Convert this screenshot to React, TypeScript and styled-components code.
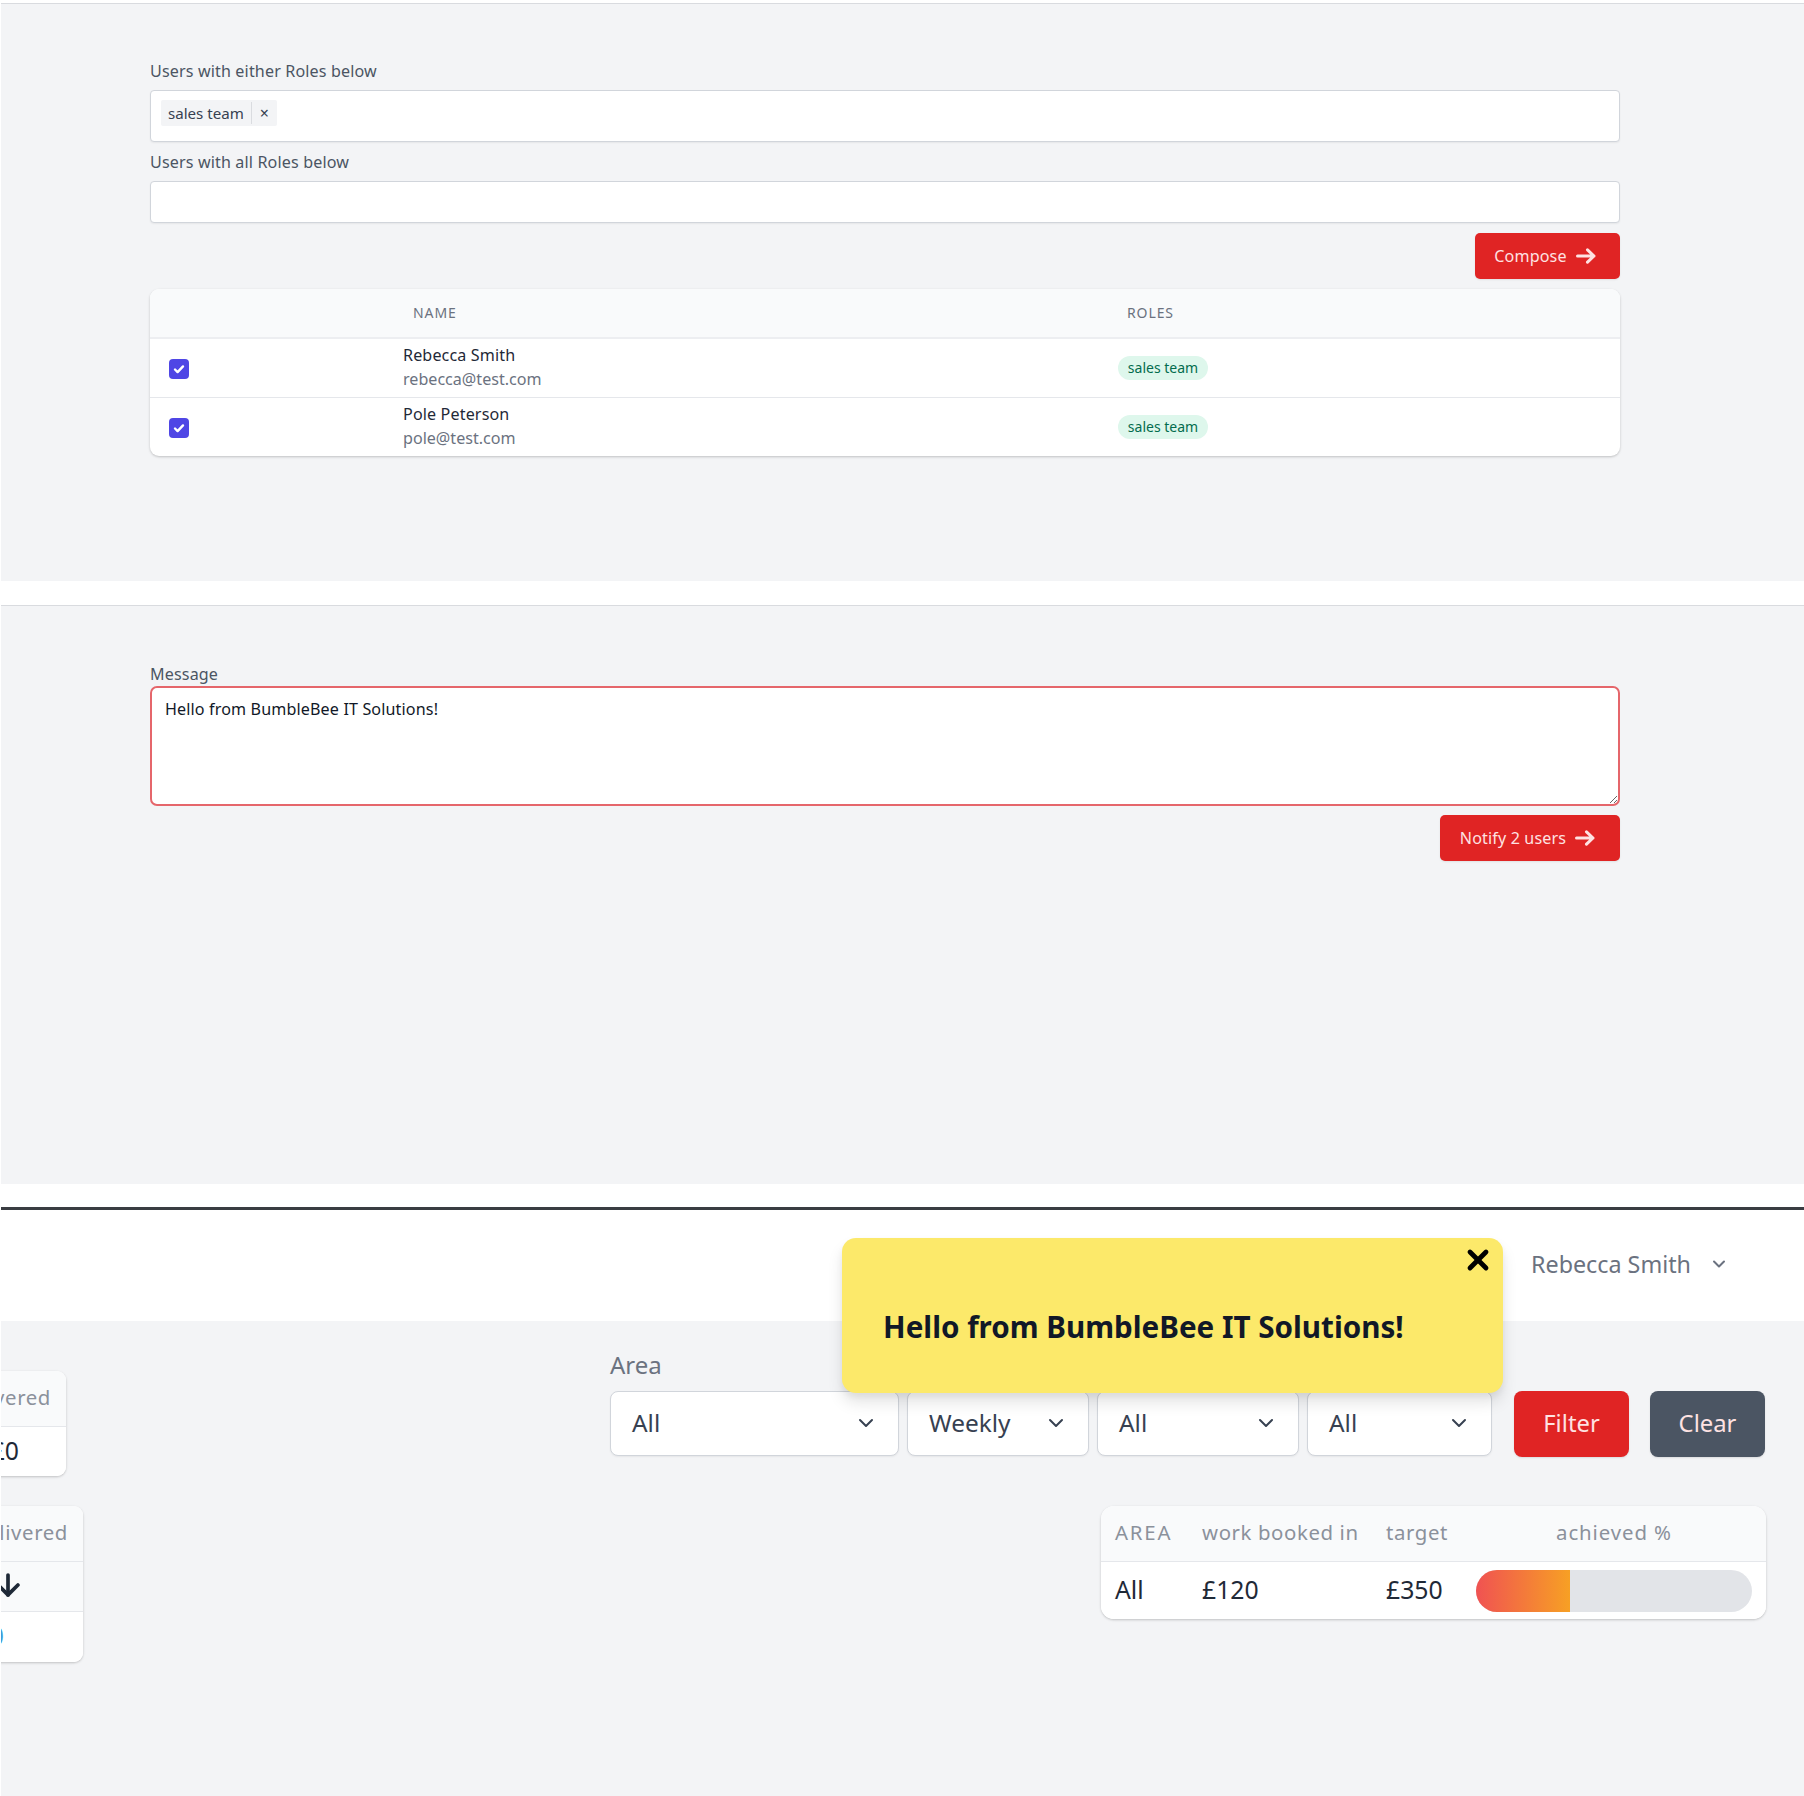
import { ArrowDown, ChevronDown, X } from "lucide-react"
import styled, { createGlobalStyle } from "styled-components"

const GlobalStyle = createGlobalStyle`
    * {
        box-sizing: border-box;
    }

    body {
        margin: 0;
        background: #FFF;
        font-family: "Noto Sans", "Open Sans", sans-serif;
        color: #111827;
    }
`

const Page = styled.div`
    width: 1804px;
    height: 1796px;
    padding-left: 1px;
    overflow: hidden;
`

const Panel = styled.section<{ $first?: boolean; $height: number }>`
    height: ${props => props.$height}px;
    margin-top: ${props => (props.$first ? 3 : 24)}px;
    padding: ${props => (props.$first ? 56 : 57)}px 184px 0 149px;
    background: #F3F4F6;
    border-top: 1px solid #D9DBDF;
`

const Label = styled.label<{ $tight?: boolean }>`
    display: block;
    height: 22px;
    margin-bottom: ${props => (props.$tight ? 1 : 8)}px;
    font-size: 16.1px;
    letter-spacing: 0.14px;
    line-height: 22px;
    color: #4B5563;
`

const MultiSelect = styled.div<{ $height: number }>`
    display: flex;
    align-items: center;
    height: ${props => props.$height}px;
    margin-bottom: 9px;
    padding: 0 10px 7px;
    background: #FFF;
    border: 1px solid #D1D5DB;
    border-radius: 4px;
    box-shadow: 0 1px 2px rgba(0, 0, 0, 0.06);
`

const Tag = styled.span`
    display: flex;
    align-items: center;
    height: 26px;
    font-size: 15.1px;
    color: #374151;
    background: #F3F4F6;
    border-radius: 2px;
`

const TagText = styled.span`
    padding: 0 7px;
    line-height: 22px;
    border-right: 1px solid #DADCE0;
`

const TagRemove = styled.span`
    width: 25px;
    text-align: center;
    font-size: 16px;
`

const ButtonRow = styled.div`
    display: flex;
    justify-content: flex-end;
    margin-bottom: 10px;
    padding-top: 1px;
`

const ActionButton = styled.button<{ $width: number }>`
    display: flex;
    align-items: center;
    justify-content: center;
    gap: 9px;
    width: ${props => props.$width}px;
    height: 46px;
    padding: 0 5px 0 0;
    font: inherit;
    font-size: 16.1px;
    letter-spacing: 0.14px;
    color: #FEE2E2;
    background: #E02424;
    border: none;
    border-radius: 5px;
    box-shadow: 0 1px 2px rgba(0, 0, 0, 0.08);
`

const Card = styled.div`
    background: #FFF;
    border-radius: 9px;
    box-shadow: 0 1px 3px rgba(0, 0, 0, 0.14), 0 1px 2px rgba(0, 0, 0, 0.08);
    overflow: hidden;
`

const UserTable = styled.table`
    width: 100%;
    table-layout: fixed;
    border-collapse: collapse;
`

const HeadRow = styled.tr`
    height: 49px;
    background: #F9FAFB;
    border-bottom: 2px solid #EDEEF1;
`

const HeadCell = styled.th<{ $inset: number }>`
    padding: 0 0 2px ${props => props.$inset}px;
    text-align: left;
    font-size: 14px;
    font-weight: 400;
    letter-spacing: 0.9px;
    color: #6B7280;
`

const BodyRow = styled.tr`
    height: 59px;
    border-top: 1px solid #E5E7EB;
`

const CheckCell = styled.td`
    padding: 3px 0 0 19px;
`

const CheckBox = styled.span`
    display: flex;
    align-items: center;
    justify-content: center;
    width: 20px;
    height: 20px;
    background: #4F46E5;
    border-radius: 4px;
`

const NameCell = styled.td`
    padding: 0 0 1px;
`

const RoleCell = styled.td`
    padding: 1px 0 0;
`

const UserName = styled.div`
    font-size: 16.1px;
    letter-spacing: 0.14px;
    line-height: 24px;
    color: #1F2937;
`

const UserMail = styled.div`
    font-size: 16.1px;
    line-height: 24px;
    color: #6B7280;
`

const RolePill = styled.span`
    display: inline-block;
    width: 90px;
    height: 24px;
    font-size: 14px;
    line-height: 24px;
    text-align: center;
    color: #046C4E;
    background: #DEF7EC;
    border-radius: 12px;
`

const MessageBox = styled.textarea`
    display: block;
    width: 100%;
    height: 120px;
    margin-bottom: 8px;
    padding: 9px 13px;
    font: inherit;
    font-size: 16.1px;
    letter-spacing: 0.14px;
    line-height: 24px;
    color: #111827;
    background: #FFF;
    border: 2px solid #E5666B;
    border-radius: 7px;
    outline: none;
`

const Dashboard = styled.section`
    margin-top: 23px;
    border-top: 3px solid #3A3D42;
`

const TopBar = styled.header`
    position: relative;
    display: flex;
    align-items: center;
    justify-content: flex-end;
    gap: 18px;
    height: 111px;
    padding: 0 75px 3px 0;
    font-size: 23.3px;
    color: #6B7280;
`

const Toast = styled.div`
    position: absolute;
    left: 841px;
    top: 28px;
    z-index: 2;
    display: flex;
    align-items: center;
    width: 661px;
    height: 155px;
    padding: 21px 0 0 41px;
    font-size: 29.6px;
    font-weight: 700;
    color: #111827;
    background: #FCE96A;
    border-radius: 14px;
    box-shadow: 0 10px 15px rgba(0, 0, 0, 0.1), 0 4px 6px rgba(0, 0, 0, 0.05);
`

const ToastClose = styled.span`
    position: absolute;
    top: 6px;
    right: 9px;
    color: #000;
`

const Content = styled.div`
    height: 475px;
    padding-top: 30px;
    background: #F3F4F6;
    overflow: hidden;
`

const ContentRow = styled.div<{ $height: number }>`
    display: flex;
    justify-content: space-between;
    align-items: flex-start;
    height: ${props => props.$height}px;
    padding-right: 38px;
`

const ClippedCard = styled(Card)<{ $width: number; $top: number }>`
    width: ${props => props.$width}px;
    margin-top: ${props => props.$top}px;
    margin-left: -120px;
`

const ClippedCell = styled.div<{ $height: number; $tint?: boolean; $right: number; $line?: boolean }>`
    display: flex;
    align-items: center;
    justify-content: flex-end;
    height: ${props => props.$height}px;
    padding-right: ${props => props.$right}px;
    background: ${props => (props.$tint ? "#F9FAFB" : "#FFF")};
    border-bottom: ${props => (props.$line ? "1px solid #E5E7EB" : "none")};
`

const ColumnTitle = styled.span`
    padding-bottom: 3px;
    font-size: 20.4px;
    letter-spacing: 0.6px;
    color: #8B919B;
    white-space: nowrap;
`

const AreaTitle = styled(ColumnTitle)`
    letter-spacing: 1.8px;
`

const AchievedTitle = styled(ColumnTitle)`
    text-align: center;
    padding-right: 14px;
    letter-spacing: 0.9px;
`

const CellValue = styled.span<{ $link?: boolean }>`
    padding-bottom: 4px;
    font-size: 24.8px;
    color: ${props => (props.$link ? "#3F9BD8" : "#1F2937")};
`

const DownArrow = styled(ArrowDown)`
    margin-bottom: 3px;
`

const Filters = styled.form`
    display: flex;
    align-items: flex-end;
    margin: 0 1px 0 0;
`

const FilterField = styled.div`
    display: flex;
    flex-direction: column;
`

const FilterLabel = styled.span`
    height: 26px;
    margin-bottom: 14px;
    font-size: 24px;
    line-height: 28px;
    color: #6B7280;
`

const SelectBox = styled.div<{ $width: number; $gap: number }>`
    display: flex;
    align-items: center;
    justify-content: space-between;
    width: ${props => props.$width}px;
    height: 65px;
    margin: 0 ${props => props.$gap}px 1px 0;
    padding: 0 20px 2px 21px;
    font-size: 24.4px;
    color: #374151;
    background: #FFF;
    border: 1px solid #D1D5DB;
    border-radius: 8px;
    box-shadow: 0 1px 2px rgba(0, 0, 0, 0.06);
`

const FilterButton = styled.button<{ $dark?: boolean }>`
    width: 115px;
    height: 66px;
    margin-left: ${props => (props.$dark ? 21 : 14)}px;
    padding: 0 0 3px;
    font: inherit;
    font-size: 23.8px;
    color: #FEE2E2;
    background: ${props => (props.$dark ? "#4B5563" : "#E02424")};
    border: none;
    border-radius: 8px;
    box-shadow: 0 1px 2px rgba(0, 0, 0, 0.1);
`

const AreaCard = styled(Card)`
    width: 665px;
    border-radius: 13px;
`

const AreaHead = styled.div`
    display: grid;
    grid-template-columns: 87px 184px 90px 1fr;
    align-items: center;
    height: 56px;
    padding-left: 14px;
    background: #F9FAFB;
    border-bottom: 1px solid #E5E7EB;
`

const AreaBody = styled(AreaHead)`
    height: 57px;
    background: #FFF;
    border-bottom: none;
`

const ProgressTrack = styled.div`
    width: 276px;
    height: 42px;
    background: #E2E4E8;
    border-radius: 21px;
    overflow: hidden;
`

const ProgressFill = styled.div`
    height: 100%;
    background: linear-gradient(90deg, #F05252, #F7A024);
`

function ArrowIcon() {
    return (
        <svg width="20" height="16" viewBox="0 0 20 16" fill="none" stroke="currentColor" strokeWidth="3" strokeLinecap="round" strokeLinejoin="round">
            <path d="M1.5 8h16.5M11.5 1.8L18 8l-6.5 6.2" />
        </svg>
    )
}

function CheckMark() {
    return (
        <svg width="16" height="16" viewBox="0 0 16 16" fill="none" stroke="#FFF" strokeWidth="2.4" strokeLinecap="round" strokeLinejoin="round">
            <path d="M4 8.5l2.6 2.6L12 5.4" />
        </svg>
    )
}

function App() {
    const target = 350
    const booked = 120

    return (
        <Page>
            <GlobalStyle />

            <Panel $first $height={578}>
                <Label>Users with either Roles below</Label>
                <MultiSelect $height={52}>
                    <Tag>
                        <TagText>sales team</TagText>
                        <TagRemove>×</TagRemove>
                    </Tag>
                </MultiSelect>
                <Label>Users with all Roles below</Label>
                <MultiSelect $height={42} />
                <ButtonRow>
                    <ActionButton type="button" $width={145}>
                        Compose
                        <ArrowIcon />
                    </ActionButton>
                </ButtonRow>
                <Card>
                    <UserTable>
                        <colgroup>
                            <col width={253} />
                            <col width={715} />
                            <col />
                        </colgroup>
                        <thead>
                            <HeadRow>
                                <HeadCell $inset={0} />
                                <HeadCell $inset={10}>NAME</HeadCell>
                                <HeadCell $inset={9}>ROLES</HeadCell>
                            </HeadRow>
                        </thead>
                        <tbody>
                            <BodyRow>
                                <CheckCell><CheckBox><CheckMark /></CheckBox></CheckCell>
                                <NameCell>
                                    <UserName>Rebecca Smith</UserName>
                                    <UserMail>rebecca@test.com</UserMail>
                                </NameCell>
                                <RoleCell><RolePill>sales team</RolePill></RoleCell>
                            </BodyRow>
                            <BodyRow>
                                <CheckCell><CheckBox><CheckMark /></CheckBox></CheckCell>
                                <NameCell>
                                    <UserName>Pole Peterson</UserName>
                                    <UserMail>pole@test.com</UserMail>
                                </NameCell>
                                <RoleCell><RolePill>sales team</RolePill></RoleCell>
                            </BodyRow>
                        </tbody>
                    </UserTable>
                </Card>
            </Panel>

            <Panel $height={579}>
                <Label $tight>Message</Label>
                <MessageBox readOnly defaultValue="Hello from BumbleBee IT Solutions!" />
                <ButtonRow>
                    <ActionButton type="button" $width={180}>
                        Notify 2 users
                        <ArrowIcon />
                    </ActionButton>
                </ButtonRow>
            </Panel>

            <Dashboard>
                <TopBar>
                    <Toast>
                        Hello from BumbleBee IT Solutions!
                        <ToastClose><X size={32} strokeWidth={3.6} /></ToastClose>
                    </Toast>
                    Rebecca Smith
                    <ChevronDown size={20} strokeWidth={2.4} />
                </TopBar>

                <Content>
                    <ContentRow $height={155}>
                        <ClippedCard $width={185} $top={20}>
                            <ClippedCell $height={56} $right={15} $tint $line>
                                <ColumnTitle>delivered</ColumnTitle>
                            </ClippedCell>
                            <ClippedCell $height={49} $right={47}>
                                <CellValue>£0</CellValue>
                            </ClippedCell>
                        </ClippedCard>
                        <Filters>
                            <FilterField>
                                <FilterLabel>Area</FilterLabel>
                                <SelectBox $width={289} $gap={8}>All<ChevronDown size={24} strokeWidth={2} /></SelectBox>
                            </FilterField>
                            <SelectBox $width={182} $gap={8}>Weekly<ChevronDown size={24} strokeWidth={2} /></SelectBox>
                            <SelectBox $width={202} $gap={8}>All<ChevronDown size={24} strokeWidth={2} /></SelectBox>
                            <SelectBox $width={185} $gap={8}>All<ChevronDown size={24} strokeWidth={2} /></SelectBox>
                            <FilterButton type="button">Filter</FilterButton>
                            <FilterButton type="button" $dark>Clear</FilterButton>
                        </Filters>
                    </ContentRow>
                    <ContentRow $height={160}>
                        <ClippedCard $width={202} $top={0}>
                            <ClippedCell $height={56} $right={15} $tint $line>
                                <ColumnTitle>delivered</ColumnTitle>
                            </ClippedCell>
                            <ClippedCell $height={50} $right={58} $tint $line>
                                <DownArrow size={34} strokeWidth={2.6} color="#1F2937" />
                            </ClippedCell>
                            <ClippedCell $height={50} $right={79}>
                                <CellValue $link>0</CellValue>
                            </ClippedCell>
                        </ClippedCard>
                        <AreaCard>
                            <AreaHead>
                                <AreaTitle>AREA</AreaTitle>
                                <ColumnTitle>work booked in</ColumnTitle>
                                <ColumnTitle>target</ColumnTitle>
                                <AchievedTitle>achieved %</AchievedTitle>
                            </AreaHead>
                            <AreaBody>
                                <CellValue>All</CellValue>
                                <CellValue>£120</CellValue>
                                <CellValue>£350</CellValue>
                                <ProgressTrack>
                                    <ProgressFill style={{ width: `${Math.floor((booked / target) * 100)}%` }} />
                                </ProgressTrack>
                            </AreaBody>
                        </AreaCard>
                    </ContentRow>
                </Content>
            </Dashboard>
        </Page>
    )
}

export default App
